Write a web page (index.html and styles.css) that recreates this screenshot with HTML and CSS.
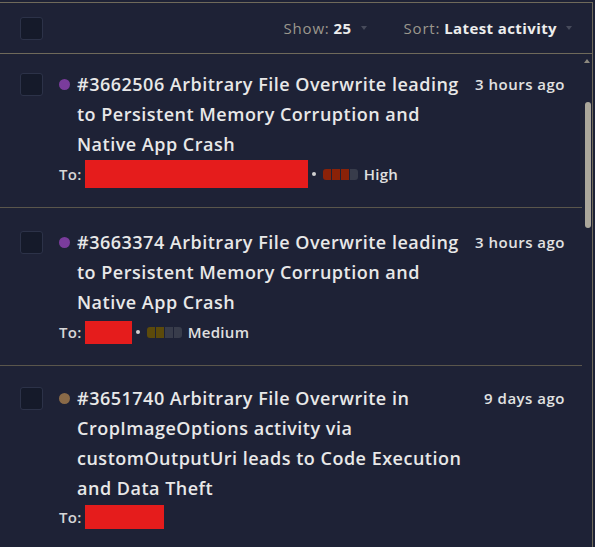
FILE: index.html
```html
<!DOCTYPE html>
<html>
<head>
<meta charset="utf-8">
<link rel="stylesheet" href="styles.css">
</head>
<body>
<div class="panel">
  <div class="header">
    <span class="checkbox"></span>
    <div class="controls">
      <span class="control"><span class="label">Show:</span><b>25</b><span class="caret"></span></span>
      <span class="control"><span class="label">Sort:</span><b>Latest activity</b><span class="caret"></span></span>
    </div>
  </div>
  <div class="list">
    <div class="row row-first">
      <span class="checkbox row-check"></span>
      <div class="main">
        <div class="title-line">
          <span class="dot dot-purple"></span>
          <span class="title">#3662506 Arbitrary File Overwrite leading to Persistent Memory Corruption and Native App Crash</span>
        </div>
        <div class="meta">
          <span class="to">To:</span>
          <span class="redact" style="width:223px;height:28px"></span>
          <span class="bullet"></span>
          <span class="sev"><i class="s-high"></i><i class="s-high"></i><i class="s-high"></i><i></i></span>
          <span class="sev-label">High</span>
        </div>
      </div>
      <div class="time">3 hours ago</div>
    </div>
    <div class="row">
      <span class="checkbox row-check"></span>
      <div class="main">
        <div class="title-line">
          <span class="dot dot-purple"></span>
          <span class="title">#3663374 Arbitrary File Overwrite leading to Persistent Memory Corruption and Native App Crash</span>
        </div>
        <div class="meta">
          <span class="to">To:</span>
          <span class="redact" style="width:47px;height:23px"></span>
          <span class="bullet"></span>
          <span class="sev"><i class="s-med"></i><i class="s-med"></i><i></i><i></i></span>
          <span class="sev-label">Medium</span>
        </div>
      </div>
      <div class="time">3 hours ago</div>
    </div>
    <div class="row row-last">
      <span class="checkbox row-check"></span>
      <div class="main">
        <div class="title-line">
          <span class="dot dot-brown"></span>
          <span class="title">#3651740 Arbitrary File Overwrite in CropImageOptions activity via customOutputUri leads to Code Execution and Data Theft</span>
        </div>
        <div class="meta meta-last">
          <span class="to">To:</span>
          <span class="redact" style="width:79px;height:24px"></span>
        </div>
      </div>
      <div class="time">9 days ago</div>
    </div>
    <div class="scrollbar">
      <span class="arrow"></span>
      <span class="thumb"></span>
    </div>
  </div>
</div>
</body>
</html>
```
FILE: styles.css
```css
html, body {
  margin: 0;
  padding: 0;
  background: #1e2236;
  height: 100%;
  overflow: hidden;
}
body {
  font-family: "Open Sans", "Roboto", sans-serif;
  color: #e6e6e6;
}
.panel {
  margin-top: 2px;
  width: 592px;
  height: 545px;
  border-top: 1px solid #6f6a5b;
  border-right: 1px solid #6f6a5b;
  overflow: hidden;
}
.header {
  height: 50px;
  border-bottom: 1px solid #6f6a5b;
  display: flex;
  align-items: center;
  padding-left: 20px;
}
.checkbox {
  display: block;
  box-sizing: border-box;
  width: 23px;
  height: 23px;
  background: #151a2a;
  border: 1px solid #2c3248;
  border-radius: 3px;
  flex: none;
}
.controls {
  margin-left: auto;
  display: flex;
  gap: 37px;
  padding-right: 20px;
  font-size: 15px;
  letter-spacing: 0.4px;
}
.control {
  display: flex;
  align-items: center;
}
.control .label {
  color: #9b978d;
  font-weight: 500;
  letter-spacing: 0.8px;
}
.control b {
  color: #ededed;
  font-weight: 700;
  margin-left: 4px;
}
.caret {
  margin-left: 9px;
  width: 0;
  height: 0;
  border-left: 3.5px solid transparent;
  border-right: 3.5px solid transparent;
  border-top: 4px solid #474b5b;
}
.list {
  position: relative;
}
.row {
  width: 582px;
  box-sizing: border-box;
  display: flex;
  padding: 19px 17px 18px 20px;
  border-bottom: 1px solid #5a564c;
}
.row-first {
  padding-top: 15px;
}
.row-last {
  border-bottom: none;
  padding-top: 17px;
}
.row-check {
  margin-top: 4px;
  margin-right: 16px;
}
.main {
  flex: 1;
  min-width: 0;
}
.title-line {
  display: flex;
  align-items: flex-start;
}
.dot {
  flex: none;
  width: 11px;
  height: 11px;
  border-radius: 50%;
  margin-top: 10px;
  margin-right: 7px;
}
.dot-purple { background: #7a3c9c; }
.dot-brown { background: #8a6a48; }
.title {
  font-size: 18px;
  font-weight: 600;
  line-height: 30px;
  letter-spacing: 0.5px;
  color: #e8e8e8;
  max-width: 394px;
}
.meta {
  display: flex;
  align-items: center;
  height: 30px;
  font-size: 15px;
  letter-spacing: 0.3px;
}
.meta-last {
  height: 28px;
}
.to {
  font-weight: 600;
  color: #d6d6d6;
  margin-right: 3px;
}
.redact {
  display: block;
  background: #e51c1c;
}
.bullet {
  width: 4px;
  height: 4px;
  border-radius: 50%;
  background: #d0d0d0;
  margin: 0 7px 0 4px;
}
.sev {
  display: flex;
  gap: 1px;
  border-radius: 3px;
  overflow: hidden;
  margin-right: 6px;
}
.sev i {
  display: block;
  width: 8px;
  height: 11px;
  background: #383c4b;
}
.sev i.s-high { background: #8a2208; }
.sev i.s-med { background: #5c4a0b; }
.sev-label {
  font-weight: 600;
  color: #e0e0e0;
}
.time {
  flex: none;
  font-size: 15px;
  font-weight: 600;
  line-height: 30px;
  letter-spacing: 0.5px;
  color: #e2e2e2;
  margin-left: 8px;
}
.scrollbar {
  position: absolute;
  top: 0;
  left: 582px;
  width: 10px;
  height: 500px;
}
.arrow {
  position: absolute;
  top: 5px;
  left: 2px;
  width: 0;
  height: 0;
  border-left: 3.5px solid transparent;
  border-right: 3.5px solid transparent;
  border-bottom: 4px solid #8e8a7f;
}
.thumb {
  position: absolute;
  top: 48px;
  left: 3px;
  width: 6px;
  height: 126px;
  border-radius: 3px;
  background: #aaa69b;
}
```
